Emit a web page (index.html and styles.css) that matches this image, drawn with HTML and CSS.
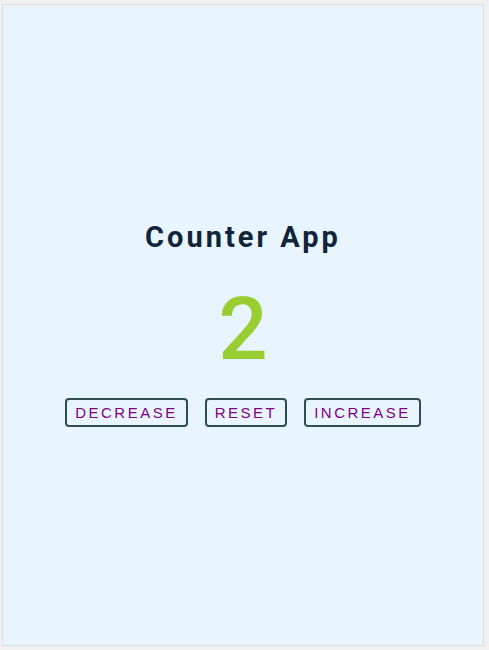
FILE: index.html
```html
<!DOCTYPE html>
<html>
<head>
<meta charset="utf-8">
<link rel="stylesheet" href="styles.css">
</head>
<body>
<div class="app">
  <h1 class="title">Counter App</h1>
  <div class="count">2</div>
  <div class="buttons">
    <button class="btn">DECREASE</button>
    <button class="btn">RESET</button>
    <button class="btn">INCREASE</button>
  </div>
</div>
</body>
</html>
```
FILE: styles.css
```css
html, body {
  margin: 0;
  padding: 0;
  background: #f1f1f1;
}
body {
  padding: 4px 5px 4px 2px;
  height: 650px;
  box-sizing: border-box;
}
.app {
  height: 642px;
  box-sizing: border-box;
  padding-bottom: 4px;
  background: #e8f5fe;
  border: 1px solid #dadde0;
  display: flex;
  flex-direction: column;
  align-items: center;
  justify-content: center;
  font-family: Roboto, "Liberation Sans", sans-serif;
}
.title {
  margin: 0;
  font-size: 29px;
  font-weight: 700;
  letter-spacing: 3px;
  color: #10243a;
}
.count {
  margin-top: 25px;
  font-family: Roboto, sans-serif;
  font-weight: 500;
  font-size: 87px;
  line-height: 100px;
  color: #9acd32;
}
.buttons {
  display: flex;
  gap: 17px;
  margin-top: 19px;
}
.btn {
  font-family: "Liberation Sans", Arial, sans-serif;
  font-size: 15px;
  letter-spacing: 2.5px;
  color: #800080;
  background: transparent;
  border: 2px solid #2f4f4f;
  border-radius: 4px;
  padding: 0 8px;
  height: 29px;
}
```
